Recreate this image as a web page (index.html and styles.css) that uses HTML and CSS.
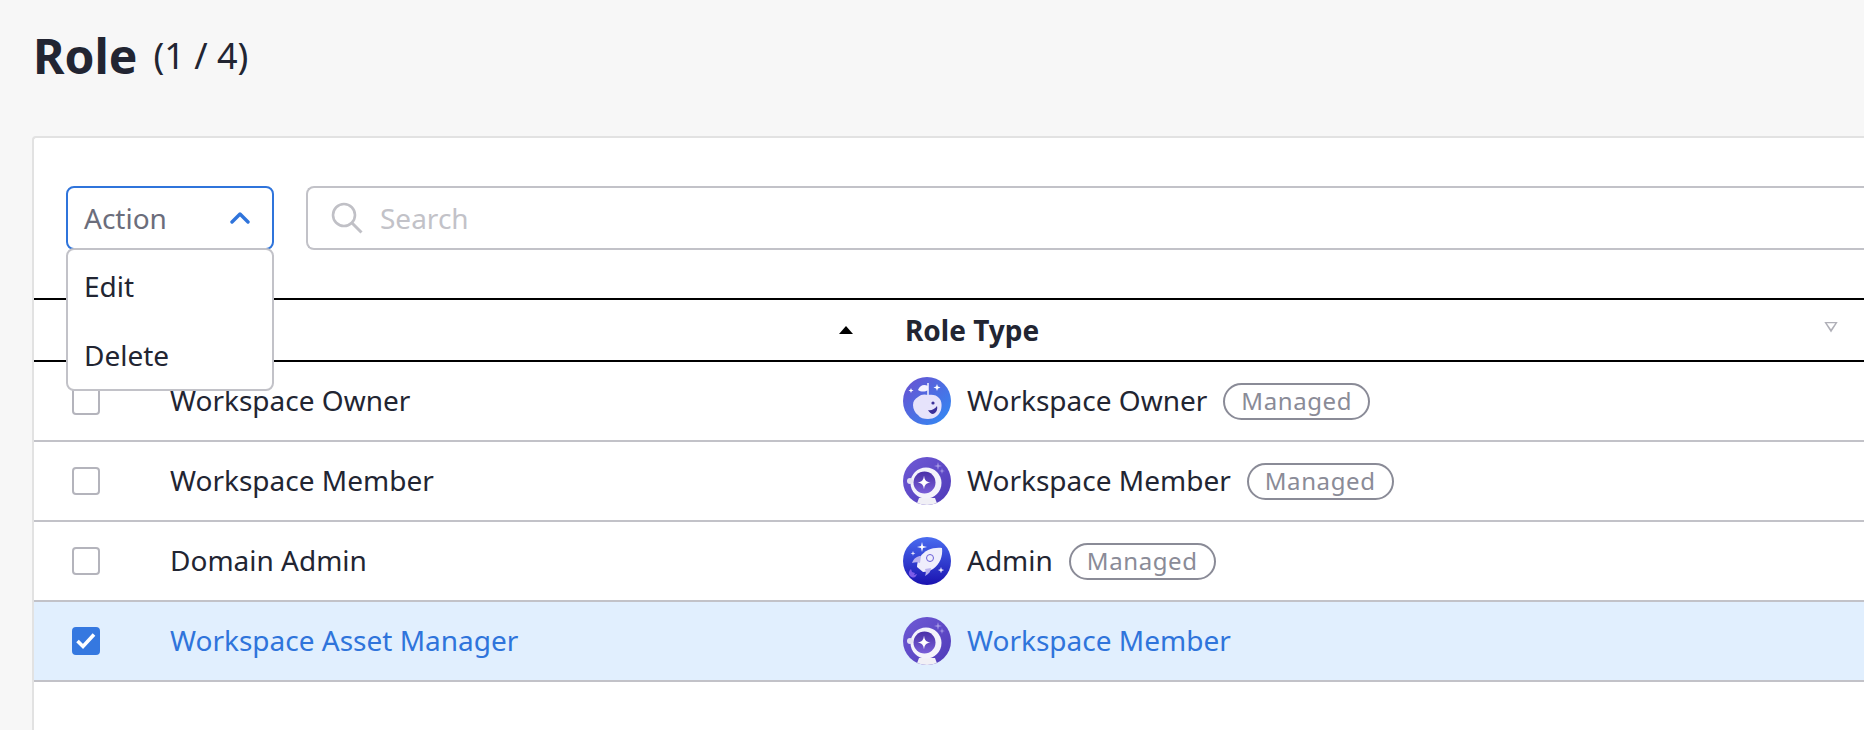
FILE: index.html
```html
<!DOCTYPE html>
<html lang="en">

<head>
   <meta charset="UTF-8">
   <meta name="viewport" content="width=device-width, initial-scale=1.0">
   <title>Role</title>
   <link rel="stylesheet" href="styles.css">
</head>

<body>

   <svg class="defs" width="0" height="0" aria-hidden="true">
       <defs>
           <linearGradient id="ownerBg" x1="0" y1="0" x2="1" y2="1">
               <stop offset="0" stop-color="#6b4fd0"/>
               <stop offset="1" stop-color="#2f8cf5"/>
           </linearGradient>
           <linearGradient id="memberBg" x1="0" y1="0" x2="1" y2="1">
               <stop offset="0" stop-color="#6f5ad6"/>
               <stop offset="1" stop-color="#4f3ab8"/>
           </linearGradient>
           <linearGradient id="visorBg" x1="0" y1="0" x2="0" y2="1">
               <stop offset="0" stop-color="#4a2fa8"/>
               <stop offset="1" stop-color="#7a5fd8"/>
           </linearGradient>
           <linearGradient id="adminBg" x1="0" y1="0" x2="0" y2="1">
               <stop offset="0" stop-color="#4a6cf0"/>
               <stop offset="1" stop-color="#1a12b0"/>
           </linearGradient>
           <clipPath id="iconClip"><circle cx="24" cy="24" r="24"/></clipPath>
           <symbol id="iconOwner" viewBox="0 0 48 48">
               <circle cx="24" cy="24" r="24" fill="url(#ownerBg)"/>
               <path d="M10 28c0-4 2-6 5-8 3-3 7-3 10-2 4-1 9 0 11 3 3 3 3 8 2 12-2 6-7 9-13 9-4 0-8-1-10-4-3-2-5-6-5-10z" fill="#e6e3fb"/>
               <path d="M25 6v12" stroke="#f7f6ff" stroke-width="1.500"/>
               <path d="M25 9c-4-2-8-1-10 4 3 2 7 2 10 0z" fill="#f4f2ff"/>
               <path d="M25 33c3 1 7-1 9-4 1 4-1 7-4 8-2 0-4-2-5-4z" fill="#3a2f9a"/>
               <circle cx="30" cy="26" r="1.600" fill="#3a2f9a"/>
               <path d="M34 7l.9 2.600 2.600.9-2.600.9-.9 2.600-.9-2.600-2.600-.9 2.600-.9zM8 11l.7 1.800 1.800.7-1.800.7-.7 1.800-.7-1.800-1.800-.7 1.800-.7z" fill="#fff"/>
           </symbol>
           <symbol id="iconMember" viewBox="0 0 48 48">
               <circle cx="24" cy="24" r="24" fill="url(#memberBg)"/>
               <g clip-path="url(#iconClip)">
                   <path d="M16 41h16l3 8H13z" fill="#f1f0f6"/>
                   <circle cx="23" cy="26" r="15.500" fill="#f4f3fb"/>
                   <circle cx="7" cy="24" r="3" fill="#e4e2f2"/>
                   <circle cx="21.500" cy="25.500" r="11" fill="url(#visorBg)"/>
                   <path d="M21 18.500c.5 4.500 2 6.500 6.500 7-4.500.5-6 2.500-6.500 7-.5-4.500-2-6.500-6.500-7 4.500-.5 6-2.500 6.500-7z" fill="#fff"/>
               </g>
               <path d="M35 5l.8 3.200 3.200.8-3.200.8-.8 3.200-.8-3.200-3.200-.8 3.200-.8z" fill="#a89be6"/>
               <path d="M39 11l.6 2.400 2.400.6-2.400.6-.6 2.400-.6-2.400-2.400-.6 2.400-.6z" fill="#a89be6"/>
           </symbol>
           <symbol id="iconAdmin" viewBox="0 0 48 48">
               <circle cx="24" cy="24" r="24" fill="url(#adminBg)"/>
               <path d="M39 11c-9-1-17 2-22 9-2 3-3 7-3 10l6 5c3 0 7-1 10-3 7-5 10-13 9-21z" fill="#efeefc"/>
               <path d="M18 19c-4 0-7 2-9 7 3-1 6-1 8 0zM28 31c0 3-2 6-6 8 1-2 1-5 0-7z" fill="#b9b2ef"/>
               <circle cx="27" cy="21" r="3.500" fill="#efeefc" stroke="#6b5fd8" stroke-width="1"/>
               <path d="M7 39c-2-3-1-5 1-7l1 3 3 1-1 2 3-1c-1 3-3 5-7 2z" fill="#7d5ce8"/>
               <path d="M19 5l1 4 4 1-4 1-1 4-1-4-4-1 4-1z" fill="#fff"/>
               <path d="M10 14l.6 1.800 1.800.6-1.800.6-.6 1.800-.6-1.800-1.800-.6 1.800-.6zM38 30l.8 2.300 2.300.8-2.300.8-.8 2.300-.8-2.300-2.300-.8 2.300-.8z" fill="#e6e4fb"/>
           </symbol>
       </defs>
   </svg>

   <header class="page-head">
       <h1 class="page-title">Role</h1>
       <span class="page-count">(1 / 4)</span>
   </header>

   <section class="card">
       <div class="toolbar">
           <div class="action-select">
               <button type="button" class="action-button">
                   <span>Action</span>
                   <svg class="chevron" width="20" height="12" viewBox="0 0 20 12"><path d="M2 10l8-8 8 8" fill="none" stroke="#2f74db" stroke-width="3.400" stroke-linecap="round" stroke-linejoin="round"/></svg>
               </button>
               <ul class="action-menu">
                   <li>Edit</li>
                   <li>Delete</li>
               </ul>
           </div>
           <div class="search-box">
               <svg width="32" height="32" viewBox="0 0 32 32"><circle cx="13" cy="13" r="11" fill="none" stroke="#c0c0c6" stroke-width="2.600"/><path d="M21 21l9.500 9.500" stroke="#c0c0c6" stroke-width="3"/></svg>
               <span class="search-placeholder">Search</span>
           </div>
       </div>

       <div class="role-table">
           <div class="table-head">
               <div class="col-check"></div>
               <div class="col-name"><span>Name</span><i class="sort-asc"></i></div>
               <div class="col-type"><span>Role Type</span><i class="sort-none"></i></div>
           </div>

           <div class="table-row">
               <div class="col-check"><span class="checkbox"></span></div>
               <div class="col-name">Workspace Owner</div>
               <div class="col-type">
                   <svg class="role-icon"><use href="#iconOwner"/></svg>
                   Workspace Owner
                   <span class="badge">Managed</span>
               </div>
           </div>
           <div class="table-row">
               <div class="col-check"><span class="checkbox"></span></div>
               <div class="col-name">Workspace Member</div>
               <div class="col-type">
                   <svg class="role-icon"><use href="#iconMember"/></svg>
                   Workspace Member
                   <span class="badge">Managed</span>
               </div>
           </div>
           <div class="table-row">
               <div class="col-check"><span class="checkbox"></span></div>
               <div class="col-name">Domain Admin</div>
               <div class="col-type">
                   <svg class="role-icon"><use href="#iconAdmin"/></svg>
                   Admin
                   <span class="badge">Managed</span>
               </div>
           </div>
           <div class="table-row selected">
               <div class="col-check">
                   <span class="checkbox checked">
                       <svg width="22" height="18" viewBox="0 0 22 18"><path d="M2.500 9l5.500 5.500L19 2.500" fill="none" stroke="#fff" stroke-width="3.600"/></svg>
                   </span>
               </div>
               <div class="col-name">Workspace Asset Manager</div>
               <div class="col-type">
                   <svg class="role-icon"><use href="#iconMember"/></svg>
                   Workspace Member
               </div>
           </div>
       </div>
   </section>

</body>

</html>
```

FILE: styles.css
```css
body {
    font-family: "Noto Sans", Arial, sans-serif;
    margin: 0;
    height: 730px;
    overflow: hidden;
    background-color: #f7f7f7;
    color: #222532;
    font-size: 28px;
}

.defs {
    position: absolute;
}

.page-head {
    display: flex;
    align-items: center;
    gap: 16px;
    height: 136px;
    padding: 0 0 24px 33px;
    box-sizing: border-box;
}

.page-title {
    margin: 0;
    font-size: 48px;
    font-weight: 700;
    line-height: 112px;
}

.page-count {
    font-size: 36px;
    line-height: 112px;
}

.card {
    margin-left: 32px;
    height: 594px;
    background-color: #fff;
    border-top: 2px solid #e2e2e2;
    border-left: 2px solid #e2e2e2;
    border-top-left-radius: 4px;
}

.toolbar {
    display: flex;
    gap: 32px;
    padding: 48px 0 0 32px;
    height: 64px;
    margin-bottom: 48px;
}

.action-select {
    position: relative;
    width: 208px;
    flex-shrink: 0;
}

.action-button {
    display: flex;
    justify-content: space-between;
    align-items: center;
    width: 100%;
    height: 64px;
    padding: 0 22px 0 16px;
    background-color: #fff;
    border: 2px solid #2f74db;
    border-radius: 8px;
    font: inherit;
    color: #6b6d7b;
}

.action-menu {
    position: absolute;
    z-index: 2;
    top: 62px;
    left: 0;
    width: 208px;
    height: 143px;
    box-sizing: border-box;
    margin: 0;
    padding: 2px 16px 0;
    list-style: none;
    background-color: #fff;
    border: 2px solid #c2c2c8;
    border-radius: 8px;
}

.action-menu li {
    height: 69px;
    line-height: 69px;
}

.search-box {
    display: flex;
    align-items: center;
    gap: 17px;
    flex-grow: 1;
    height: 64px;
    box-sizing: border-box;
    padding-left: 23px;
    border: 2px solid #c2c2c8;
    border-right: none;
    border-radius: 8px 0 0 8px;
}

.search-placeholder {
    color: #c2c2c8;
}

.table-head,
.table-row {
    display: flex;
    align-items: center;
    box-sizing: border-box;
}

.table-head {
    height: 64px;
    border-top: 2px solid #000;
    border-bottom: 2px solid #000;
    font-weight: 700;
}

.table-row {
    height: 80px;
    border-bottom: 2px solid #c2c2c8;
}

.table-row.selected {
    background-color: #e1effe;
    color: #2f74db;
}

.col-check {
    display: flex;
    align-items: center;
    width: 136px;
    padding-left: 38px;
    box-sizing: border-box;
    flex-shrink: 0;
}

.col-name {
    display: flex;
    align-items: center;
    justify-content: space-between;
    width: 736px;
    padding-right: 53px;
    box-sizing: border-box;
    flex-shrink: 0;
}

.col-type {
    display: flex;
    align-items: center;
    flex-grow: 1;
    white-space: nowrap;
}

.table-head .col-type {
    justify-content: space-between;
    margin-left: -1px;
    padding-right: 26px;
}

.table-row .col-type {
    margin-left: -3px;
}

.table-row .col-name,
.table-row .col-type {
    padding-bottom: 2px;
}

.sort-asc {
    width: 0;
    height: 0;
    border-left: 7px solid transparent;
    border-right: 7px solid transparent;
    border-bottom: 8px solid #000;
}

.sort-none {
    width: 14px;
    height: 11px;
    background-color: #b0b0b8;
    clip-path: polygon(0 0, 100% 0, 50% 100%, 0 0, 20% 16%, 50% 70%, 80% 16%, 20% 16%);
    margin-top: -6px;
}

.checkbox {
    display: flex;
    align-items: center;
    justify-content: center;
    width: 28px;
    height: 28px;
    box-sizing: border-box;
    background-color: #fff;
    border: 2px solid #b4b4bc;
    border-radius: 4px;
}

.checkbox.checked {
    background-color: #3578e0;
    border-color: #3578e0;
}

.role-icon {
    width: 48px;
    height: 48px;
    margin-top: 2px;
    margin-right: 16px;
    flex-shrink: 0;
}

.badge {
    height: 37px;
    box-sizing: border-box;
    margin-top: 2px;
    margin-left: 16px;
    padding: 0 16px;
    border: 2px solid #8a8b97;
    border-radius: 19px;
    color: #8a8b97;
    font-size: 24px;
    letter-spacing: 0.6px;
    line-height: 31px;
}
```
